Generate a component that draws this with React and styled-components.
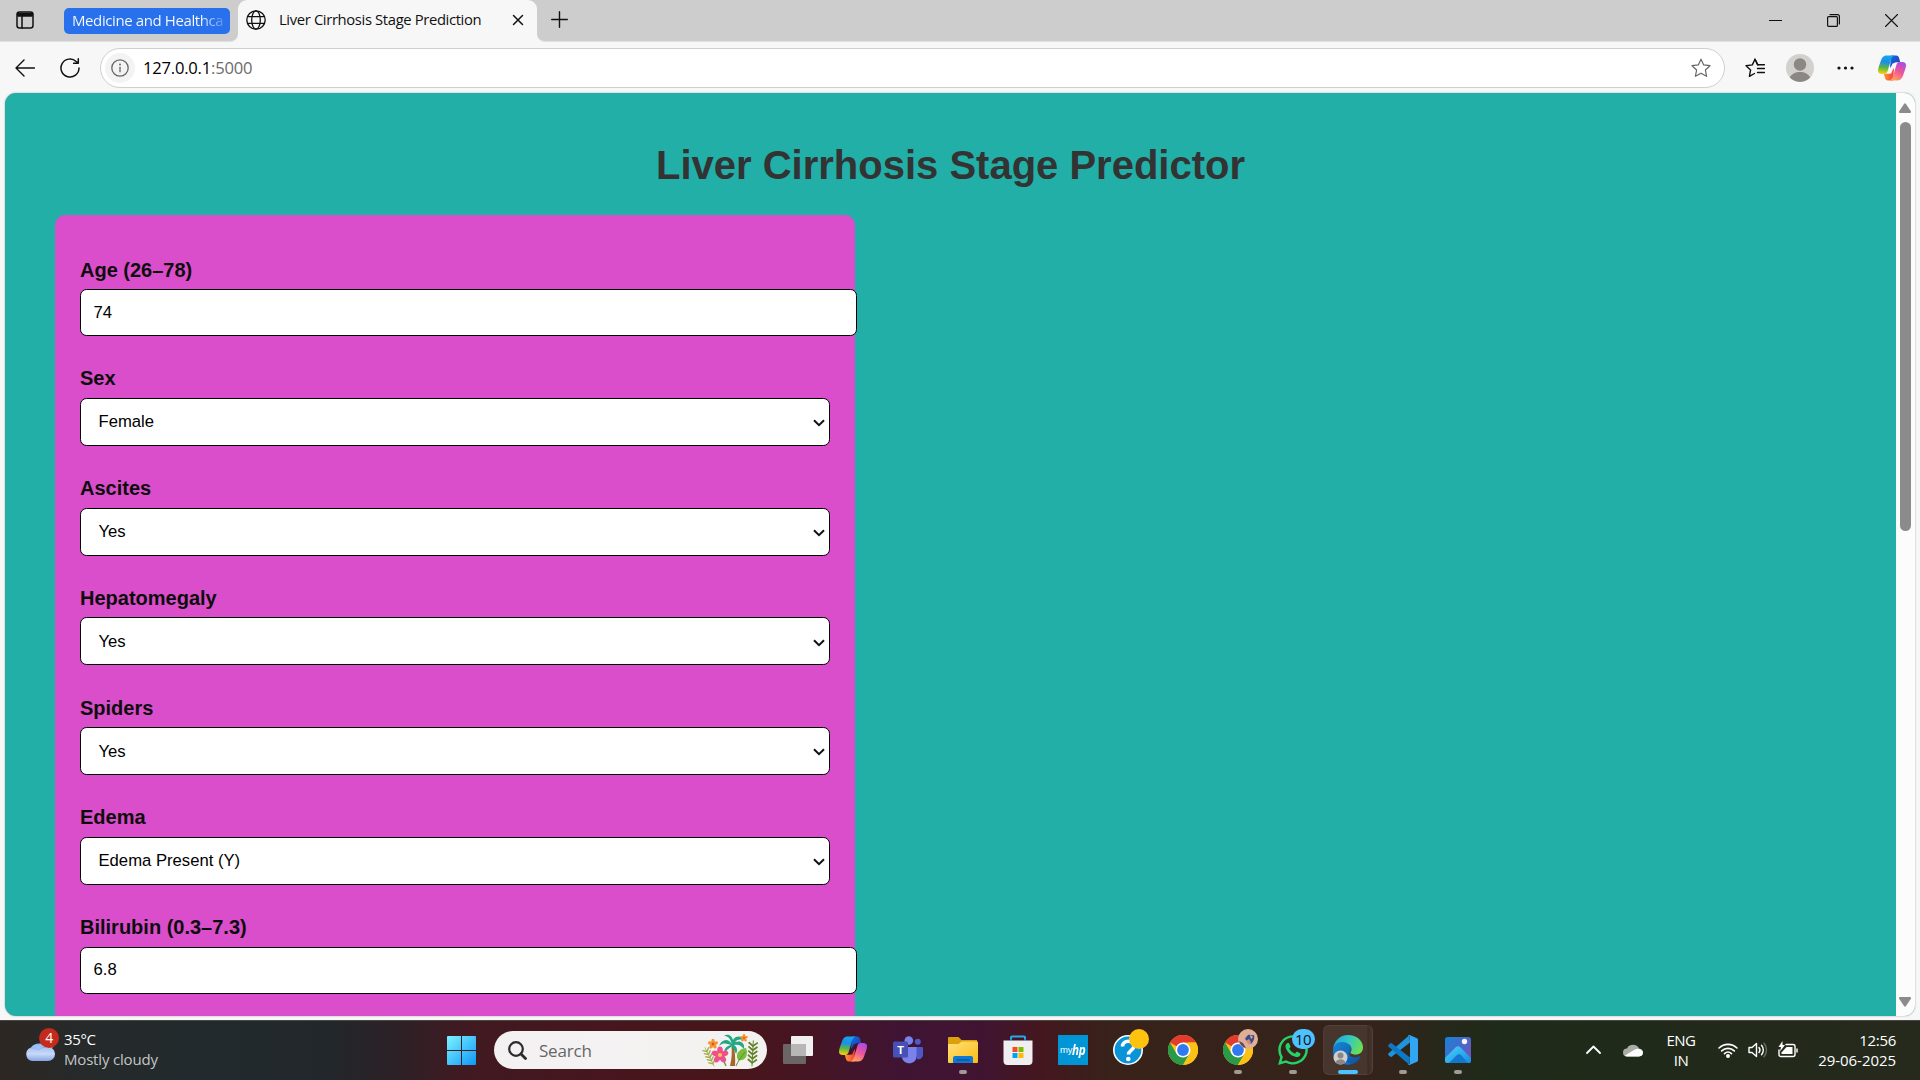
import React from "react";
import styled, { createGlobalStyle } from "styled-components";
import { FaWhatsapp } from "react-icons/fa";

const GlobalStyle = createGlobalStyle`
  *, *::before, *::after { box-sizing: border-box; }
  html, body { margin: 0; padding: 0; overflow: hidden; }
  svg { display: block; flex: none; }
`;

const ui = `"Segoe UI", "Open Sans", "Noto Sans", sans-serif`;
const arial = `"Liberation Sans", Arial, sans-serif`;

const Screen = styled.div`
  width: 1920px;
  height: 1080px;
  display: flex;
  flex-direction: column;
  background: #f7f7f7;
  font-family: ${ui};
  overflow: hidden;
`;

/* ---------- tab strip ---------- */

const TabStrip = styled.header`
  height: 42px;
  flex: none;
  display: flex;
  background: #cdcdcd;
`;

const StripLead = styled.div`
  width: 238px;
  display: flex;
  align-items: center;
  padding: 0 0 2px 16px;
  border-bottom: 1px solid #e0e0e0;
  border-bottom-right-radius: 8px;
  background: #cdcdcd;
`;

const TabGroup = styled.div`
  width: 166px;
  height: 26px;
  margin: 2px 0 0 30px;
  padding-left: 8px;
  border-radius: 5px;
  background: #2870ec;
  line-height: 25px;
  font-size: 15px;
  letter-spacing: -0.4px;
  white-space: nowrap;
`;

const FadingText = styled.span`
  display: block;
  width: 152px;
  color: transparent;
  background: linear-gradient(90deg, #fff 128px, rgba(255, 255, 255, 0.2) 152px);
  background-clip: text;
`;

const StripBack = styled.div`
  flex: ${(p) => (p.$grow ? 1 : "none")};
  background: #f7f7f7;
  display: flex;
`;

const ActiveTab = styled.div`
  width: 299px;
  height: 42px;
  display: flex;
  align-items: center;
  padding: 0 13px 2px 8px;
  border-radius: 9px 9px 0 0;
  background: #f7f7f7;
`;

const TabBackdrop = styled.div`
  background: linear-gradient(#cdcdcd 20px, #f7f7f7 20px);
`;

const TabTitle = styled.span`
  flex: 1;
  margin: -2px 0 0 13px;
  font-size: 14.8px;
  letter-spacing: -0.36px;
  line-height: 20px;
  color: #111;
  white-space: nowrap;
`;

const StripRest = styled.div`
  flex: 1;
  display: flex;
  align-items: center;
  justify-content: space-between;
  padding: 0 22px 2px 14px;
  border-bottom: 1px solid #e0e0e0;
  border-bottom-left-radius: 8px;
  background: #cdcdcd;
`;

const WindowButtons = styled.div`
  display: flex;
  align-items: center;
  gap: 45px;
  padding-top: 2px;
`;

/* ---------- toolbar ---------- */

const Toolbar = styled.nav`
  height: 51px;
  flex: none;
  display: flex;
  align-items: center;
  padding: 1px 13px 0 15px;
`;

const BackSlot = styled.div`
  width: 45px;
`;

const ReloadSlot = styled.div`
  width: 40px;
`;

const AddressBar = styled.div`
  width: 1625px;
  height: 40px;
  display: flex;
  align-items: center;
  padding: 0 13px 0 4px;
  border: 1px solid #cfcfcf;
  border-radius: 20px;
  background: #fff;
`;

const InfoBadge = styled.div`
  width: 30px;
  height: 30px;
  border-radius: 50%;
  background: #f3f3f3;
  display: grid;
  place-items: center;
`;

const Url = styled.span`
  flex: 1;
  margin: -2px 0 0 8px;
  font-size: 16.6px;
  letter-spacing: -0.22px;
  color: #000;
  span { color: #6b6b6b; }
`;

const ToolbarIcons = styled.div`
  flex: 1;
  display: flex;
  align-items: center;
  padding-left: 20px;
  gap: ${(p) => p.$gap || 21}px;
`;

const MenuDots = styled.svg`
  margin: 0 3px 0 2px;
`;

/* ---------- web page ---------- */

const PageFrame = styled.div`
  height: 923px;
  flex: none;
  margin: 0 5px 4px;
  display: flex;
  border-radius: 11px;
  overflow: hidden;
  background: #21afa8;
  box-shadow: 0 0 2px rgba(0, 0, 0, 0.35);
`;

const Page = styled.main`
  flex: 1;
  height: 923px;
  padding: 50px 50px 0;
  overflow: hidden;
  font-family: ${arial};
`;

const Heading = styled.h1`
  margin: 0 0 27px;
  height: 45px;
  font-size: 40px;
  line-height: 45px;
  text-align: center;
  color: #333;
`;

const FormCard = styled.form`
  width: 800px;
  height: 1400px;
  padding: 12.25px 25px 0;
  border-radius: 10px;
  background: #da4dcb;
`;

const FieldLabel = styled.label`
  display: block;
  height: 61.75px;
  padding-top: 31.25px;
  font-size: 20px;
  line-height: 23px;
  font-weight: 700;
  color: #0d0d0d;
`;

const TextInput = styled.input`
  display: block;
  width: 777px;
  height: 47px;
  margin: 0;
  padding: 0 12.5px;
  border: 1px solid #000;
  border-radius: 6.5px;
  background: #fff;
  font-family: ${arial};
  font-size: 16.67px;
  color: #000;
  outline: none;
`;

const SelectBox = styled.div`
  width: 750px;
  height: 48px;
  display: flex;
  align-items: center;
  justify-content: space-between;
  padding: 1px 4px 0 17.5px;
  border: 1px solid #000;
  border-radius: 6.5px;
  background: #fff;
  font-size: 16.67px;
  color: #000;
  svg { margin-top: 1.5px; }
`;

const ScrollTrack = styled.div`
  width: 19px;
  background: #fcfcfc;
  display: flex;
  flex-direction: column;
  align-items: center;
  padding: 10px 1px 9px 0;
`;

const ScrollThumb = styled.div`
  width: 11px;
  height: 409px;
  margin: 9px 0 auto;
  border-radius: 6px;
  background: #8b8b8b;
`;

/* ---------- taskbar ---------- */

const Taskbar = styled.footer`
  height: 60px;
  flex: none;
  display: flex;
  color: #fff;
  border-top: 1px solid #4a4644;
  background: linear-gradient(
    90deg,
    #2d2722 0, #262a2b 80px, #222a2d 200px, #22272b 330px, #2d2126 400px,
    #401a22 460px, #47161e 600px, #48151a 740px, #451526 820px, #3f1433 900px,
    #401431 980px, #44171f 1040px, #38221a 1110px, #34231a 1380px,
    #26281a 1440px, #1f2b1a 1500px, #202a1a 1640px, #262a1c 1920px
  );
`;

const Weather = styled.div`
  width: 434px;
  display: flex;
  padding: 5px 0 0 24px;
`;

const WeatherText = styled.div`
  margin: 3px 0 0 4px;
  font-size: 15px;
  line-height: 20px;
  letter-spacing: -0.35px;
  div + div { color: #c3c5c6; letter-spacing: -0.18px; }
`;

const StartSlot = styled.div`
  width: 60px;
  display: flex;
  padding: 15px 0 0 13px;
`;

const SearchBox = styled.div`
  width: 273px;
  height: 38px;
  margin: 10px 3px 0 0;
  display: flex;
  align-items: center;
  padding: 0 7px 0 14px;
  border-radius: 19px;
  background: linear-gradient(90deg, #f4f1f3, #f4f2f0);
  color: #666;
  font-size: 17px;
  letter-spacing: -0.2px;
`;

const SearchText = styled.span`
  flex: 1;
  margin: 1px 0 0 12px;
  line-height: 24px;
`;

const AppSlot = styled.div`
  width: 55px;
  height: 58px;
  display: flex;
  flex-direction: column;
  align-items: center;
`;

const AppTile = styled.div`
  position: relative;
  width: ${(p) => (p.$active ? 50 : 44)}px;
  height: 50px;
  margin-top: 4px;
  display: flex;
  flex-direction: column;
  align-items: center;
  padding-top: 10px;
  border-radius: 6px;
  ${(p) => p.$active && `
    background: linear-gradient(90deg, rgba(255,255,255,.09) 43px, rgba(255,255,255,.03) 44px, rgba(255,255,255,.07) 46px);
    border: 1px solid rgba(255,255,255,.06);
    padding-top: 9px;
  `}
`;

const Running = styled.div`
  width: ${(p) => (p.$active ? 20 : 8)}px;
  height: 4px;
  margin-top: 5px;
  border-radius: 2px;
  background: ${(p) => (p.$active ? "#4cc2ff" : "#9f9a98")};
`;

const CountBadge = styled.span`
  position: absolute;
  left: ${(p) => p.$x}px;
  top: ${(p) => p.$y}px;
  width: ${(p) => p.$w || 20}px;
  height: 20px;
  border-radius: 10px;
  background: ${(p) => p.$bg};
  color: ${(p) => p.$fg || "#fff"};
  font-size: ${(p) => p.$size || 14}px;
  line-height: 20px;
  text-align: center;
  letter-spacing: -0.5px;
`;

const WeatherIcon = styled.div`
  position: relative;
  width: 36px;
  height: 40px;
  padding-top: 14px;
`;

const MyHp = styled.div`
  width: 30px;
  height: 30px;
  display: flex;
  align-items: center;
  justify-content: center;
  background: #0096d6;
  font: 9.5px/12px ${arial};
  letter-spacing: -0.2px;
  b { font: italic 700 15px/14px "Open Sans", sans-serif; transform: scaleX(0.78); margin: -2px -3px 0 -2px; }
`;

const Tray = styled.div`
  flex: 1;
  display: flex;
  align-items: center;
  justify-content: flex-end;
  padding: 0 24px 2px 0;
  font-size: 15px;
  line-height: 20px;
  letter-spacing: -0.05px;
`;

const TrayIcon = styled.div`
  display: flex;
  margin-right: ${(p) => p.$gap}px;
`;

const Language = styled.div`
  width: 30px;
  margin-right: 22px;
  text-align: center;
  letter-spacing: -0.5px;
`;

const Clock = styled.div`
  width: 98px;
  text-align: right;
  white-space: nowrap;
  div:first-child { letter-spacing: -0.3px; }
`;

/* ---------- drawings ---------- */

const Line = ({ w, h = w, box, d, sw = 1.4, color = "#111", children, ...rest }) => (
  <svg width={w} height={h} viewBox={box || `0 0 ${w} ${h}`} fill="none" stroke={color}
    strokeWidth={sw} strokeLinecap="round" strokeLinejoin="round" {...rest}>
    {d && <path d={d} />}
    {children}
  </svg>
);

const Copilot = ({ id, w = 28, h = 26 }) => (
  <svg width={w} height={h} viewBox="0 0 28 26">
    <defs>
      <linearGradient id={`${id}a`} x1="0.4" y1="0" x2="0.3" y2="1">
        <stop offset="0" stopColor="#18a5ee" /><stop offset=".35" stopColor="#1e8ee6" />
        <stop offset=".65" stopColor="#57b848" /><stop offset="1" stopColor="#ffcf10" />
      </linearGradient>
      <linearGradient id={`${id}b`} x1="0.8" y1="0" x2="0.3" y2="1">
        <stop offset="0" stopColor="#a44be8" /><stop offset=".5" stopColor="#ee559a" />
        <stop offset="1" stopColor="#ffa45c" />
      </linearGradient>
      <linearGradient id={`${id}c`} x1="0" y1="0" x2="1" y2="1">
        <stop offset="0" stopColor="#1b6be0" /><stop offset="1" stopColor="#123bb8" />
      </linearGradient>
      <linearGradient id={`${id}d`} x1="0" y1="0" x2="1" y2="0">
        <stop offset="0" stopColor="#ff9a2e" /><stop offset="1" stopColor="#ef3d3d" />
      </linearGradient>
    </defs>
    <path d="M13 .5h5c2 0 2.700 1.200 3.200 2.900l1 3.800h-3.800c-2 0-3 1-3.600 2.600L12 13z" fill={`url(#${id}c)`} />
    <path d="M15 25.500h-5c-2 0-2.700-1.200-3.200-2.900l-1-3.800h3.800c2 0 3-1 3.600-2.600L16 13z" fill={`url(#${id}d)`} />
    <path d="M17 .5H8.500C5.300.5 3.800 2.900 2.700 6.200 1.400 10 0 13.300 0 15.800c0 2.200 1.600 3.200 3.700 3.200h2.300c2.300 0 3.100-1.200 3.800-3.400l3.300-11C13.800 2.300 15 .7 17 .5z" fill={`url(#${id}a)`} />
    <path d="M11 25.500h8.500c3.200 0 4.700-2.400 5.800-5.700 1.300-3.800 2.700-7.100 2.700-9.600C28 8 26.400 7 24.300 7h-2.300c-2.300 0-3.100 1.200-3.800 3.400l-3.300 11c-.7 2.300-1.900 3.900-3.900 4.100z" fill={`url(#${id}b)`} />
    <path d="M17.200 8.500 13.200 18.500H10.800L14.500 8.500z" fill={id === "bar" ? "#f7f7f7" : "#43142c"} />
  </svg>
);

const Chrome = () => (
  <svg width="30" height="30" viewBox="0 0 30 30">
    <circle cx="15" cy="15" r="15" fill="#fbc116" />
    <path d="M15 15 2 7.500A15 15 0 0 1 28 7.500H15z" fill="#e33b2e" />
    <path d="M2 7.500A15 15 0 0 0 15 30l6.500-11.250L15 22 8.500 18.750z" fill="#2a9a48" />
    <path d="M15 30 21.500 18.750A7.500 7.500 0 0 0 21.500 11.250L20 7.500H28A15 15 0 0 1 15 30z" fill="#fbc116" />
    <circle cx="15" cy="15" r="7.500" fill="#fff" />
    <circle cx="15" cy="15" r="5.900" fill="#3079ee" />
  </svg>
);

const WindowsLogo = () => (
  <svg width="29" height="29" viewBox="0 0 29 29">
    <defs>
      <linearGradient id="win" x1="0" y1="0" x2="29" y2="29" gradientUnits="userSpaceOnUse">
        <stop offset="0" stopColor="#7cf3ff" /><stop offset=".5" stopColor="#45c5fb" /><stop offset="1" stopColor="#1196f8" />
      </linearGradient>
    </defs>
    <path d="M0 1q0-1 1-1H14V14H0zM15 0H28q1 0 1 1V14H15zM0 15H14V29H1q-1 0-1-1zM15 15H29V28q0 1-1 1H15z" fill="url(#win)" />
  </svg>
);

const Flower = ({ x, y, r, fill, core }) => (
  <g transform={`translate(${x} ${y})`}>
    {[0, 72, 144, 216, 288].map((a) => (
      <ellipse key={a} cx="0" cy={-r * 0.6} rx={r * 0.38} ry={r * 0.55} fill={fill} transform={`rotate(${a})`} />
    ))}
    <circle r={r * 0.28} fill={core} />
  </g>
);

const Frond = ({ x, y, tilt, color, size = 1 }) => (
  <g transform={`translate(${x} ${y}) rotate(${tilt}) scale(${size})`} stroke={color} strokeLinecap="round" fill="none">
    <path d="M0 0V-24" strokeWidth=".9" />
    {[3, 7, 11, 15, 19].map((s) => (
      <path key={s} d={`M0 ${-s}l-3.800-3M0 ${-s}l3.800-3`} strokeWidth="1.700" />
    ))}
  </g>
);

const Tropics = () => (
  <svg width="59" height="33" viewBox="0 0 59 33">
    <Frond x={13} y={32} tilt={-26} color="#a3ae4e" size={0.85} />
    <Frond x={51} y={32} tilt={3} color="#5f8428" size={1.05} />
    <path d="M29 32c2-8 2-14 1.500-20h2.500c1 7 1.500 13 1 20z" fill="#a8652a" />
    <path d="M31 10C27 4 21 5 18 12c5-4 8-2 12-1-5 1-7 4-7 9 3-5 6-6 8-8 1 3 3 4 4 8 2-4 1-7-2-9 4-1 7 0 10 4 1-6-3-9-9-7 2-3 6-3 9-2-2-4-8-5-11 0-1-4-5-7-9-4 4 0 6 2 8 8z" fill="#1fa884" />
    <path d="M37 26c-3-5 0-11 8-12 3 7-1 14-8 12z" fill="#7cbc3c" />
    <path d="M35 32c2-5 5-9 9-14" stroke="#4f9330" strokeWidth="1" fill="none" />
    <path d="M25 32c-1-3-2-5-4-7" stroke="#5e9c32" strokeWidth="1.200" fill="none" />
    <Flower x={19} y={21} r={7.500} fill="#ef4f8f" core="#ffc93c" />
    <Flower x={12} y={10} r={4.500} fill="#f59430" core="#d9541e" />
    <Flower x={43} y={4} r={3.500} fill="#f59430" core="#d9541e" />
  </svg>
);

const TaskView = () => (
  <svg width="30" height="30" viewBox="0 0 30 30">
    <rect x="8" y="1" width="22" height="20" rx="1" fill="#f1f0f0" />
    <rect x="0" y="9" width="23" height="20" rx="1" fill="#6b6665" />
    <path d="M8 9H22q1 0 1 1V21H8z" fill="#b9b6b6" />
  </svg>
);

const TeamsLetter = styled.text`
  font: 700 11px ${arial};
  fill: #fff;
`;

const Teams = () => (
  <svg width="30" height="30" viewBox="0 0 30 30">
    <circle cx="24.800" cy="6.800" r="3" fill="#5059c9" />
    <path d="M21 12h8q1 0 1 1v6c0 4-3 6-6 5z" fill="#4f58c8" />
    <circle cx="15.800" cy="5.500" r="4.300" fill="#7b83eb" />
    <path d="M9 12h14.500v9.500c0 9-14.500 9-14.500 0z" fill="#7b83eb" />
    <rect x="0" y="6.500" width="15" height="16" rx="1.500" fill="#4750b5" />
    <TeamsLetter x="7.500" y="18.500" textAnchor="middle">T</TeamsLetter>
  </svg>
);

const Folder = () => (
  <svg width="30" height="30" viewBox="0 0 30 30">
    <defs>
      <linearGradient id="fold" x1="0" y1="0" x2="1" y2="1">
        <stop offset="0" stopColor="#ffe07a" /><stop offset="1" stopColor="#fbbd14" />
      </linearGradient>
    </defs>
    <path d="M0 3q0-1 1-1h9.500L13.500 5H29v5H0z" fill="#dca00d" />
    <path d="M0 9h10.500L13.500 6.500H29q1 0 1 1V27q0 1-1 1H1q-1 0-1-1z" fill="url(#fold)" />
    <path d="M5 28v-5q0-2 2-2h16q2 0 2 2v5z" fill="#0f78d4" />
    <path d="M8.500 25h13" stroke="#0a4c92" strokeWidth="1.200" />
  </svg>
);

const Store = () => (
  <svg width="30" height="30" viewBox="0 0 30 30">
    <path d="M8 8V2.500q0-1 1-1h12q1 0 1 1V8" fill="none" stroke="#29a8ea" strokeWidth="2" />
    <path d="M.5 5.500H29.500V26q0 4-4 4h-21q-4 0-4-4z" fill="#f0efef" />
    <path d="M8 5.500V4M22 5.500V4" stroke="#1686d2" strokeWidth="2" />
    <path d="M9.500 12h5v5h-5z" fill="#f25022" /><path d="M15.500 12h5v5h-5z" fill="#7fba00" />
    <path d="M9.500 18h5v5h-5z" fill="#00a4ef" /><path d="M15.500 18h5v5h-5z" fill="#ffb900" />
  </svg>
);

const Help = () => (
  <svg width="30" height="30" viewBox="0 0 30 30">
    <circle cx="15" cy="15" r="14.200" fill="#0a94d8" stroke="#fff" strokeWidth="1.600" />
    <path d="M9.500 11.500c0-7 11.500-7 11.500-.5 0 4-5.500 4.200-5.500 8.500" fill="none" stroke="#fff" strokeWidth="3.600" />
    <circle cx="15.300" cy="24" r="2.300" fill="#fff" />
  </svg>
);

const Edge = () => (
  <svg width="30" height="30" viewBox="0 0 30 30">
    <defs>
      <linearGradient id="edgeTop" x1="0" y1="0.300" x2="1" y2="0.600">
        <stop offset="0" stopColor="#1fa5e0" /><stop offset=".5" stopColor="#34c9c0" /><stop offset="1" stopColor="#6fe04c" />
      </linearGradient>
      <linearGradient id="edgeLow" x1="0" y1="0" x2="1" y2="1">
        <stop offset="0" stopColor="#1688d8" /><stop offset="1" stopColor="#0f4f9e" />
      </linearGradient>
    </defs>
    <path d="M0 15C1 8 7 6 12 7c6 1.500 7 6 5 9-3 5 3 8 9 5.500 1-.5 2 .2 1 1.500C23 30 13 32 6 27 2 24-.5 20 0 15z" fill="url(#edgeLow)" />
    <path d="M0 14C1 6 7 0 15 0c9 0 15 6 15 12.500 0 7-8 8.500-12 6-1.500-1 .5-1.500.5-4.500C18.500 10 14 7 9.500 7 5 7 1.500 9.500 0 14z" fill="url(#edgeTop)" />
    <path d="M12 13c-4 5-2 13 6 16-9 2-15-4-14-10 .5-4 4-6 8-6z" fill="#1473c8" />
    <circle cx="7.500" cy="22.500" r="7" fill="#cfcfcf" />
    <circle cx="7.500" cy="20.500" r="3" fill="#8a8784" />
    <path d="M2.500 27.200c1.500-4 8.500-4 10 0-2.500 3-7.500 3-10 0z" fill="#8a8784" />
  </svg>
);

const VsCode = () => (
  <svg width="30" height="30" viewBox="0 0 30 30">
    <path d="M22 7.500 4 21.500q-1 .8-2 0L.6 20.200q-1-1 0-1.900L21.500 0z" fill="#1f93dc" />
    <path d="M22 22.500 4 8.500q-1-.8-2 0L.6 9.800q-1 1 0 1.900L21.500 30z" fill="#0f78c4" />
    <path d="M21.500 0 29 3.300q1 .5 1 1.500v20.400q0 1-1 1.500L21.500 30q-1 .2-1.700-.9 2.200.6 2.200-1.300V2.200Q22 .3 19.800.9 20.500-.2 21.500 0z" fill="#31a6f2" />
  </svg>
);

const Photos = () => (
  <svg width="30" height="30" viewBox="0 0 30 30">
    <defs>
      <linearGradient id="pho" x1="0" y1="0" x2="1" y2=".8">
        <stop offset="0" stopColor="#1683dc" /><stop offset="1" stopColor="#7352b8" />
      </linearGradient>
      <linearGradient id="hill" x1="0" y1="0" x2="1" y2="1">
        <stop offset="0" stopColor="#48d4f8" /><stop offset="1" stopColor="#168ce4" />
      </linearGradient>
    </defs>
    <rect x="2" y="2" width="26" height="26" rx="2.500" fill="url(#pho)" />
    <path d="M2 23 13 12q2-1.600 4 0L28 23v2.500q0 2.500-2.500 2.500h-21Q2 28 2 25.500z" fill="url(#hill)" />
    <path d="M6 28 14 20q2-1.600 4 0l7 8z" fill="#1377d0" />
    <circle cx="21.500" cy="6.500" r="2.700" fill="#f2f5ff" />
  </svg>
);

const FaceBadge = () => (
  <svg width="20" height="20" viewBox="0 0 20 20">
    <circle cx="10" cy="10" r="10" fill="#e0ae94" />
    <path d="M9 7c2-3 4 0 7-1 1 4-1 7-3 9-2-3-5-2-6-6 1 0 1-1 2-2z" fill="#3a4a8c" />
    <path d="M8 12l3-2 2 3-2 3z" fill="#d38e78" /><path d="M12 6l3 2-2 2z" fill="#e2b7a0" />
    <path d="M1 12l4 2 3 5q-5-1-7-7z" fill="#5a4a66" />
  </svg>
);

const Overlay = styled.div`
  position: absolute;
  left: 22px;
  top: 4px;
`;

const CloudIcon = () => (
  <svg width="32" height="22" viewBox="0 0 32 22">
    <defs>
      <linearGradient id="cl" x1="0" y1="0" x2="0" y2="1">
        <stop offset="0" stopColor="#8fb3f2" /><stop offset=".6" stopColor="#c8daf8" /><stop offset="1" stopColor="#86a4e2" />
      </linearGradient>
    </defs>
    <circle cx="24" cy="4" r="6" fill="#f07c1c" />
    <path d="M8 21a7 7 0 0 1-1-13.500 10 8 0 0 1 17-.5 7 7 0 0 1 0 14z" fill="url(#cl)" />
    <path d="M7 8q5-1 7 2 3-3 8-3" stroke="#7fa1e6" strokeWidth="1" fill="none" opacity=".6" />
  </svg>
);

const Chevron = () => (
  <svg width="12" height="8" viewBox="0 0 12 8" fill="none" stroke="#111" strokeWidth="2">
    <path d="M1 1.200 6 6.200 11 1.200" />
  </svg>
);

const starPath = "M10 1.200 12.700 6.900 19 7.700 14.400 12 15.600 18.300 10 15.200 4.400 18.300 5.600 12 1 7.700 7.300 6.900z";

/* ---------- content ---------- */

const fields = [
  { label: "Age (26–78)", value: "74", kind: "text" },
  { label: "Sex", value: "Female" },
  { label: "Ascites", value: "Yes" },
  { label: "Hepatomegaly", value: "Yes" },
  { label: "Spiders", value: "Yes" },
  { label: "Edema", value: "Edema Present (Y)" },
  { label: "Bilirubin (0.3–7.3)", value: "6.8", kind: "text" },
];

const WhatsappIcon = styled(FaWhatsapp)`
  width: 34px;
  height: 34px;
  margin: -2px 0;
  color: #25d366;
`;

const apps = [
  { id: "taskview", icon: <TaskView /> },
  { id: "copilot", icon: <Copilot id="task" h={28} /> },
  { id: "teams", icon: <Teams /> },
  { id: "files", icon: <Folder />, running: true },
  { id: "store", icon: <Store /> },
  { id: "myhp", icon: <MyHp>my<b>hp</b></MyHp> },
  { id: "help", icon: <Help />, badge: <CountBadge $x={23} $y={4} $bg="#ffc20e" /> },
  { id: "chrome", icon: <Chrome /> },
  { id: "chrome-profile", icon: <Chrome />, running: true, badge: <Overlay><FaceBadge /></Overlay> },
  {
    id: "whatsapp", icon: <WhatsappIcon />, running: true,
    badge: <CountBadge $x={21} $y={4} $w={23} $bg="#4cc2ff" $fg="#111" $size={15}>10</CountBadge>,
  },
  { id: "edge", icon: <Edge />, running: true, active: true },
  { id: "vscode", icon: <VsCode />, running: true },
  { id: "photos", icon: <Photos />, running: true },
];

const Field = ({ label, value, kind }) => (
  <div>
    <FieldLabel>{label}</FieldLabel>
    {kind === "text" ? (
      <TextInput defaultValue={value} />
    ) : (
      <SelectBox>{value}<Chevron /></SelectBox>
    )}
  </div>
);

export default function App() {
  return (
    <Screen>
      <GlobalStyle />
      <TabStrip>
        <StripBack>
          <StripLead>
            <Line w={18} sw={1.5}>
              <rect x="1" y="1" width="16" height="16" rx="2.500" />
              <path d="M1.500 3.500H16.500M6 5V17" />
              <path d="M2 2.500H16V5H2z" fill="#111" />
            </Line>
            <TabGroup><FadingText>Medicine and Healthca</FadingText></TabGroup>
          </StripLead>
        </StripBack>
        <TabBackdrop>
          <ActiveTab>
            <Line w={20} sw={1.3}>
              <circle cx="10" cy="10" r="9.200" /><ellipse cx="10" cy="10" rx="4.300" ry="9.200" />
              <path d="M1.800 6.700H18.200M1.800 13.300H18.200" />
            </Line>
            <TabTitle>Liver Cirrhosis Stage Prediction</TabTitle>
            <Line w={12} d="M1.500 1.500 10.500 10.500M10.500 1.500 1.500 10.500" sw={1.5} />
          </ActiveTab>
        </TabBackdrop>
        <StripBack $grow>
          <StripRest>
            <Line w={17} d="M8.500.7V16.300M.7 8.500H16.300" />
            <WindowButtons>
              <Line w={13} d="M0 6.500H13" sw={1} strokeLinecap="butt" />
              <Line w={13} sw={1.2}>
                <rect x=".6" y="2.600" width="9.800" height="9.800" rx="1" />
                <path d="M3 .6H10.500Q12.400.6 12.400 2.500V10" />
              </Line>
              <Line w={13} d="M.5.5 12.500 12.500M12.500.5.5 12.500" sw={1.1} />
            </WindowButtons>
          </StripRest>
        </StripBack>
      </TabStrip>

      <Toolbar>
        <BackSlot><Line w={20} h={18} d="M19.500 9H1M9 1 1 9 9 17" /></BackSlot>
        <ReloadSlot>
          <Line w={20} sw={1.5} d="M19 10a9 9 0 1 1-2.800-6.500L18 5M18.300.8V5.300H13.600" />
        </ReloadSlot>
        <AddressBar>
          <InfoBadge>
            <Line w={18} sw={1.3} color="#666">
              <circle cx="9" cy="9" r="8.200" /><path d="M9 8.300V12.800" /><circle cx="9" cy="5.500" r=".4" />
            </Line>
          </InfoBadge>
          <Url>127.0.0.1<span>:5000</span></Url>
          <Line w={20} d={starPath} sw={1.2} color="#666" />
        </AddressBar>
        <ToolbarIcons>
          <Line w={20} sw={1.4}>
            <path d="M13 6.900H12.700L10 1.200 7.300 6.900 1 7.700 5.600 12 4.400 18.300 9.500 15.500M12.500 10.500H19.500M12.500 14.500H19.500" />
            <path d="M10 1.200 12.700 6.700H19.500" />
          </Line>
          <svg width="28" height="28" viewBox="0 0 28 28">
            <circle cx="14" cy="14" r="14" fill="#d3d1ce" />
            <circle cx="14" cy="10.500" r="6.200" fill="#8b8785" />
            <path d="M3.800 23.500c3-7.500 17.400-7.500 20.400 0a14 14 0 0 1-20.400 0z" fill="#8b8785" />
          </svg>
          <MenuDots width="17" height="4" viewBox="0 0 17 4" fill="#111">
            <circle cx="2" cy="2" r="1.600" /><circle cx="8.500" cy="2" r="1.600" /><circle cx="15" cy="2" r="1.600" />
          </MenuDots>
          <Copilot id="bar" />
        </ToolbarIcons>
      </Toolbar>

      <PageFrame>
        <Page>
          <Heading>Liver Cirrhosis Stage Predictor</Heading>
          <FormCard>
            {fields.map((f) => <Field key={f.label} {...f} />)}
          </FormCard>
        </Page>
        <ScrollTrack>
          <svg width="12" height="10" viewBox="0 0 12 10"><path d="M5 1q1-1.300 2 0l5 7.500q.3 1.300-1 1.500H1Q-.3 9.800 0 8.500z" fill="#8b8b8b" /></svg>
          <ScrollThumb />
          <svg width="12" height="10" viewBox="0 0 12 10"><path d="M5 9q1 1.300 2 0l5-7.500Q12.300.2 11 0H1Q-.3.2 0 1.500z" fill="#8b8b8b" /></svg>
        </ScrollTrack>
      </PageFrame>

      <Taskbar>
        <Weather>
          <WeatherIcon>
            <CloudIcon />
            <CountBadge $x={15} $y={2} $bg="#c42b1c">4</CountBadge>
          </WeatherIcon>
          <WeatherText><div>35°C</div><div>Mostly cloudy</div></WeatherText>
        </Weather>
        <StartSlot><WindowsLogo /></StartSlot>
        <SearchBox>
          <Line w={19} sw={2.2} color="#2b2b2b">
            <circle cx="8" cy="8" r="6.800" /><path d="M13 13 17.500 17.500" strokeWidth="2.800" />
          </Line>
          <SearchText>Search</SearchText>
          <Tropics />
        </SearchBox>
        {apps.map((a) => (
          <AppSlot key={a.id}>
            <AppTile $active={a.active}>
              {a.icon}
              {a.running && <Running $active={a.active} />}
              {a.badge}
            </AppTile>
          </AppSlot>
        ))}
        <Tray>
          <TrayIcon $gap={22}><Line w={15} h={9} d="M1 8 7.500 1.500 14 8" sw={1.8} color="#fff" /></TrayIcon>
          <TrayIcon $gap={23}>
            <svg width="20" height="14" viewBox="0 0 20 14">
              <path d="M4 13.500a4 4 0 0 1 0-8 6.500 6 0 0 1 12 0q4 .5 4 4t-4 4z" fill="#a9ada5" />
              <path d="M2 12.500 11 7q5-3 8.500 1 1.500 5-3.500 5.500H4q-1.500 0-2-1z" fill="#fff" />
            </svg>
          </TrayIcon>
          <Language><div>ENG</div><div>IN</div></Language>
          <TrayIcon $gap={10}>
            <Line w={20} h={16} color="#fff" sw={1.6}>
              <path d="M1 6a13 13 0 0 1 18 0M3.700 8.900a9 9 0 0 1 12.600 0M6.500 11.600a5 5 0 0 1 7 0" />
              <circle cx="10" cy="14" r="1.200" fill="#fff" />
            </Line>
          </TrayIcon>
          <TrayIcon $gap={10}>
            <Line w={20} h={16} color="#fff" sw={1.4}>
              <path d="M1 5.500H4L8.500 1.500V14.500L4 10.500H1zM11 5.500a4 4 0 0 1 0 5M13.500 3.300a7 7 0 0 1 0 9.400" />
              <path d="M16 1.200a10.500 10.500 0 0 1 0 13.600" stroke="#667060" />
            </Line>
          </TrayIcon>
          <TrayIcon $gap={0}>
            <Line w={20} h={17} color="#fff" sw={1.4}>
              <path d="M8 3.500H15Q17 3.500 17 5.500V13.500Q17 15.500 15 15.500H3Q1 15.500 1 13.500V9" />
              <path d="M8.500 6H14.500V13H3.500V11.500z" fill="#fff" stroke="none" />
              <path d="M19 8V11" />
              <path d="M4.500 0 .5 6H3L2 10.500 7 4H4.500z" fill="#fff" stroke="none" />
            </Line>
          </TrayIcon>
          <Clock><div>12:56</div><div>29-06-2025</div></Clock>
        </Tray>
      </Taskbar>
    </Screen>
  );
}
